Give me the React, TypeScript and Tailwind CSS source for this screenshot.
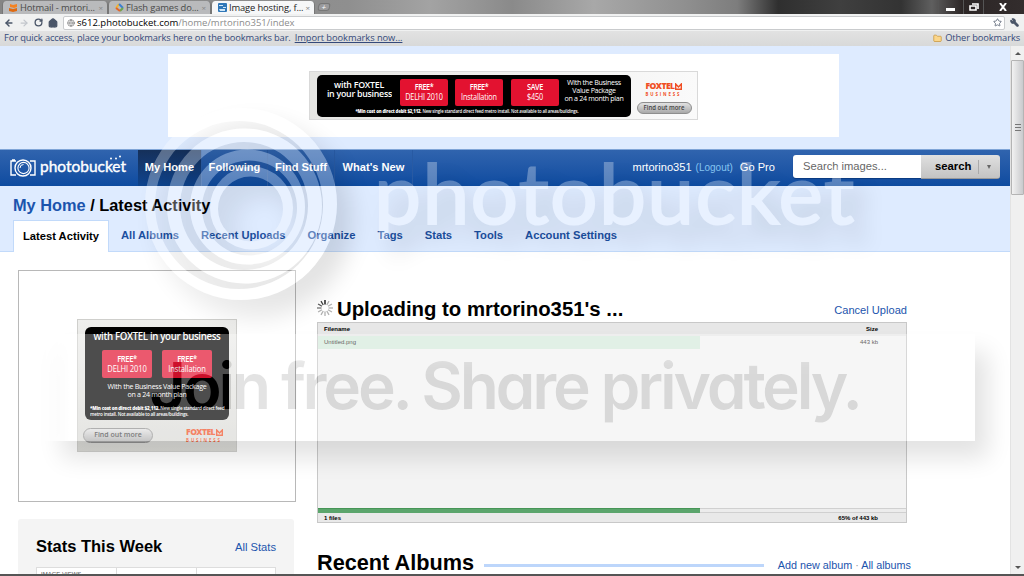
import { ArrowLeft, ArrowRight, RotateCw, House, Globe, Star, Wrench, Folder } from 'lucide-react';

const BROWSER_TABS = [
  { label: 'Hotmail - mrtori...', width: 'w-[106px]', active: false },
  { label: 'Flash games do...', width: 'w-[103px]', active: false },
  { label: 'Image hosting, f...', width: 'w-[104px]', active: true },
];

const NAV_ITEMS = [
  { label: 'My Home', width: 'w-[64px]', active: true },
  { label: 'Following', width: 'w-[66px]', active: false },
  { label: 'Find Stuff', width: 'w-[67px]', active: false },
  { label: "What's New", width: 'w-[78px]', active: false },
];

const SUB_TABS = ['All Albums', 'Recent Uploads', 'Organize', 'Tags', 'Stats', 'Tools', 'Account Settings'];

function TabIcon({ index }: { index: number }) {
  if (index === 0) {
    return (
      <svg width="9" height="9" viewBox="0 0 9 9">
        <path d="M1 1l3 1 4-1v3L5 5 1 4z" fill="#f58220" />
        <path d="M0 5l4 1 4-1v3L4 9 0 8z" fill="#e06a10" />
      </svg>
    );
  }
  if (index === 1) {
    return (
      <svg width="9" height="9" viewBox="0 0 9 9" fill="none" strokeWidth="2">
        <path d="M1 5l3-4" stroke="#f4b32c" />
        <path d="M4 1l4 4" stroke="#3c7fd0" />
        <path d="M8 5L5 8" stroke="#6aa84f" />
        <path d="M5 8L1 5" stroke="#e0662c" />
      </svg>
    );
  }
  return (
    <svg width="9" height="9" viewBox="0 0 9 9">
      <rect width="9" height="9" rx="1" fill="#2f77b8" />
      <path d="M1 2h4v1H1zM5 4h3v1H5zM1 6h6v2H2z" fill="#cfe6f7" />
    </svg>
  );
}

function BrowserChrome() {
  return (
    <div className="h-[46px] font-['Open_Sans','Noto_Sans',sans-serif] text-[#34497a]">
      <div className="flex h-[14px] bg-[linear-gradient(90deg,#858585_0,#8f8f8f_34%,#a3a3a3_42%,#8a8a8a_50%,#a8a8a8_58%,#8f8f8f_67%,#7d7d7d_72%,#2f2f2f_76%,#3f3f3f_82%,#333_88%,#5f5f5f_91%,#2c2626_94%,#332d2d_100%)]">
        <div className="flex flex-1 pl-[2px]">
          {BROWSER_TABS.map((tab, i) => (
            <div
              key={tab.label}
              className={`${tab.width} mt-px flex h-[13px] items-center rounded-t-[4px] border-x border-[#777] pr-[4px] pl-[6px] ${
                tab.active ? 'bg-[#f6f7f8] text-[#222]' : 'bg-[#b9babc] text-[#4a4a4a]'
              }`}
            >
              <TabIcon index={i} />
              <span className="ml-[2px] flex-1 pt-px text-[9.4px] tracking-[-0.14px] whitespace-nowrap">{tab.label}</span>
              <span className="text-[8px] text-[#888]">×</span>
            </div>
          ))}
          <div className="mt-[3px] ml-[3px] flex h-[8px] w-[12px] -skew-x-12 items-center justify-center rounded-[3px] border border-[#777] bg-[#9a9a9c] text-[8px] leading-none text-white">
            +
          </div>
        </div>
        <div className="flex w-[86px] border-l border-[#555]">
          <div className="flex w-[24px] justify-center">
            <span className="mt-[8px] h-[3px] w-[9px] bg-white" />
          </div>
          <div className="flex w-[21px] justify-center border-l border-[#555]">
            <svg className="mt-[3px]" width="10" height="8" viewBox="0 0 10 8" fill="none" stroke="#fff" strokeWidth="1.6">
              <path d="M3 1h6v5" />
              <path d="M1 3h6v4H1z" />
            </svg>
          </div>
          <div className="flex w-[41px] justify-center border-l border-[#555]">
            <svg className="mt-[3px] -ml-[3px]" width="8" height="8" viewBox="0 0 8 8" stroke="#fff" strokeWidth="2">
              <path d="M1 0l6 8M7 0L1 8" />
            </svg>
          </div>
        </div>
      </div>
      <div className="flex h-[17px] items-center bg-[#f0f1f1] pl-[4px]">
        <ArrowLeft size={10} strokeWidth={3.5} color="#4a5568" />
        <ArrowRight className="ml-[5px]" size={10} strokeWidth={3} color="#c2c6cc" />
        <RotateCw className="ml-[5px]" size={9} strokeWidth={3.5} color="#4a5568" />
        <House className="ml-[5px]" size={10} strokeWidth={3} color="#4a5568" fill="#4a5568" />
        <div className="ml-[5px] flex h-[14px] flex-1 items-center rounded-[2px] border border-[#c9cbcd] bg-white pl-[3px]">
          <Globe size={8} color="#777" />
          <span className="ml-[2px] flex-1 text-[9.5px] leading-[12px] text-[#8c8c8c]">
            <span className="text-black">s612.photobucket.com</span>/home/mrtorino351/index
          </span>
          <Star className="mr-[2px]" size={9} color="#4a5568" />
        </div>
        <Wrench className="mx-[5px] -scale-x-100" size={9} strokeWidth={3} color="#4a5568" fill="#4a5568" />
      </div>
      <div className="flex h-[15px] items-center bg-linear-to-b from-[#e2e2e2] to-[#d8d9d9] px-[4px] pb-px text-[9.3px] whitespace-nowrap">
        <span className="tracking-[-0.12px]">For quick access, place your bookmarks here on the bookmarks bar.</span>
        <span className="ml-[4px] tracking-[-0.05px] underline">Import bookmarks now...</span>
        <Folder className="ml-auto" size={9} color="#c8963c" fill="#fbd68a" />
        <span className="ml-[3px] tracking-[-0.1px]">Other bookmarks</span>
      </div>
    </div>
  );
}

function FoxtelLogo() {
  return (
    <div className="font-['Open_Sans',sans-serif] text-[#f04e23]">
      <div className="flex h-[9px] items-center text-[8.6px] leading-[9px] font-extrabold tracking-[-0.6px]">
        FOXTEL
        <svg className="ml-[1px]" width="7" height="7" viewBox="0 0 7 7" fill="none" stroke="#f04e23" strokeWidth="1.4">
          <path d="M.7 1v5.300h5.600V1L3.500 4z" />
        </svg>
      </div>
      <div className="mt-px text-[4.3px] leading-[5px] font-bold tracking-[1.9px]">BUSINESS</div>
    </div>
  );
}

function FindOutMore({ className }: { className: string }) {
  return (
    <div className={`flex items-center justify-center rounded-full border border-[#8e8e8e] bg-linear-to-b from-[#e2e2e2] to-[#a9a9a9] font-semibold whitespace-nowrap text-[#444] ${className}`}>
      <span className="scale-y-110">Find out more</span>
    </div>
  );
}

function Offer({ top, bottom, className }: { top: string; bottom: string; className: string }) {
  return (
    <div className={`flex flex-col items-center justify-center rounded-[2px] bg-[#e31230] text-center whitespace-nowrap text-white ${className}`}>
      <b className="scale-y-115 font-semibold tracking-[-0.4px]">{top}</b>
      <span className="scale-y-115 tracking-[-0.15px]">{bottom}</span>
    </div>
  );
}

function LeaderboardAd() {
  return (
    <div className="ml-[168px] flex h-[83px] w-[671px] items-start bg-white pt-[17px] pl-[141px]">
      <div className="flex h-[49px] w-[389px] border border-[#d9d9d9] bg-linear-to-r from-[#e6e6e3] to-[#fafafa] pt-[3px] pl-[7px] font-['Open_Sans','Noto_Sans',sans-serif]">
        <div className="h-[42px] w-[314px] rounded-[5px] bg-black pt-[4px] text-white">
          <div className="flex h-[27px]">
            <div className="w-[75px] scale-y-110 pt-[2px] text-right text-[8.8px] leading-[9px] font-semibold tracking-[-0.25px] whitespace-nowrap">
              <div className="pr-[8px]">with FOXTEL</div>
              <div>in your business</div>
            </div>
            <Offer top="FREE*" bottom="DELHI 2010" className="ml-[8px] w-[48px] text-[7.3px] leading-[9.5px]" />
            <Offer top="FREE*" bottom="Installation" className="ml-[7px] w-[48px] text-[7.3px] leading-[9.5px]" />
            <Offer top="SAVE" bottom="$450" className="ml-[8px] w-[48px] text-[7.3px] leading-[9.5px]" />
            <div className="ml-[5px] w-[60px] scale-y-110 pt-px text-center text-[7.1px] leading-[7px] tracking-[-0.3px] whitespace-nowrap">
              <div>With the Business</div>
              <div>Value Package</div>
              <div>on a 24 month plan</div>
            </div>
          </div>
          <div className="mt-[2px] scale-y-115 pr-[14px] text-center text-[4.3px] leading-[6px] font-semibold tracking-[-0.15px] whitespace-nowrap">
            <b>*Min cost on direct debit $2,112.</b> New single standard direct feed metro install. Not available to all areas/buildings.
          </div>
        </div>
        <div className="flex flex-1 flex-col items-center pt-[7px]">
          <FoxtelLogo />
          <FindOutMore className="mt-[5px] h-[12px] w-[55px] text-[6px]" />
        </div>
      </div>
    </div>
  );
}

function SideAd() {
  return (
    <div className="flex h-[232px] w-[278px] items-start border border-[#b8b8b8] bg-white pt-[48px] pl-[58px] font-['Open_Sans','Noto_Sans',sans-serif]">
      <div className="h-[133px] w-[160px] border border-[#cfcfcc] bg-linear-to-b from-[#eeeeec] to-[#d9d9d5] pt-[7px] pl-[7px]">
        <div className="h-[93px] w-[144px] rounded-[6px] bg-black pt-[3px] text-center whitespace-nowrap text-white">
          <div className="scale-y-110 text-[9.7px] leading-[13px] font-semibold tracking-[-0.35px]">with FOXTEL in your business</div>
          <div className="mt-[7px] flex justify-center gap-[10px]">
            <Offer top="FREE*" bottom="DELHI 2010" className="h-[28px] w-[50px] text-[7.6px] leading-[10px]" />
            <Offer top="FREE*" bottom="Installation" className="h-[28px] w-[50px] text-[7.6px] leading-[10px]" />
          </div>
          <div className="mt-[5px] scale-y-110 text-[7.1px] leading-[7px] tracking-[-0.3px]">
            With the Business Value Package
            <br />
            on a 24 month plan
          </div>
          <div className="mt-[9px] scale-y-115 pl-[5px] text-left text-[4.6px] leading-[4.8px] font-semibold tracking-[-0.2px]">
            <b>*Min cost on direct debit $2,112.</b> New single standard direct feed
            <br />
            metro install. Not available to all areas/buildings.
          </div>
        </div>
        <div className="flex justify-between pt-[8px] pr-[13px]">
          <FindOutMore className="-ml-[2px] h-[15px] w-[70px] text-[7px]" />
          <FoxtelLogo />
        </div>
      </div>
    </div>
  );
}

function PhotobucketLogo() {
  return (
    <div className="flex w-[138px] items-center pl-[10px] text-white">
      <svg width="26" height="20" viewBox="0 0 26 20" fill="none" stroke="#fff" strokeWidth="1.4">
        <path d="M6 3H1v14h5M20 3h5v14h-5M2 2h3" />
        <circle cx="13" cy="10" r="8" />
        <circle cx="13.5" cy="10" r="5.6" strokeWidth="1.1" />
        <path d="M10 10a3.500 3.500 0 0 1 3.500-3.500" strokeWidth="1" />
      </svg>
      <svg width="96" height="26" viewBox="0 0 96 26" fill="#fff">
        <text x="4" y="17" fontSize="16" textLength="86" lengthAdjust="spacingAndGlyphs" fontFamily="Lato, sans-serif" stroke="#fff" strokeWidth=".4">
          photobucket
        </text>
        <circle cx="75" cy="3.500" r="1" />
        <circle cx="80" cy="3.500" r="1" />
        <circle cx="84" cy="1.500" r="1" />
      </svg>
    </div>
  );
}

function NavBar() {
  return (
    <div className="flex h-[37px] border-t border-[#7fa5d8] bg-linear-to-b from-[#3064ae] to-[#0d4ba0] text-[11px] text-white">
      <PhotobucketLogo />
      {NAV_ITEMS.map((item) => (
        <div
          key={item.label}
          className={`${item.width} flex items-center justify-center border-r border-[#285aa3] pb-[2px] text-[11.1px] font-bold whitespace-nowrap ${
            item.active ? 'bg-linear-to-b from-[#15305a] to-[#0d448f]' : ''
          }`}
        >
          {item.label}
        </div>
      ))}
      <div className="ml-auto flex items-center pb-[2px] whitespace-nowrap">
        <span className="text-[11.1px]">mrtorino351</span>
        <span className="ml-[4px] text-[10px] text-[#84c4f0]">(Logout)</span>
        <span className="ml-[7px] text-[11.1px]">Go Pro</span>
      </div>
      <div className="mt-[5px] mr-[10px] ml-[18px] flex h-[24px] w-[207px] rounded-[3px] text-[#666]">
        <div className="h-[23px] flex-1 rounded-l-[3px] bg-white pl-[10px] text-[11.2px] leading-[22px] shadow-[0_1px_1px_#0b3a80]">Search images...</div>
        <div className="flex w-[79px] items-center rounded-r-[3px] border-b border-[#999] bg-linear-to-b from-[#e0e0e0] to-[#c3c3c3] pl-[14px] text-[11.3px] font-bold text-black">
          search
          <span className="ml-[7px] h-[14px] w-px bg-[#aaa]" />
          <span className="ml-[8px] border-x-[2.5px] border-t-[4px] border-x-transparent border-t-[#666]" />
        </div>
      </div>
    </div>
  );
}

function PageHeader() {
  return (
    <div className="h-[206px] border-b border-[#c2dafa] bg-[#deebff] pt-[8px]">
      <LeaderboardAd />
      <div className="mt-[12px]">
        <NavBar />
      </div>
      <div className="h-[34px] pt-[7px] pl-[13px] text-[16.35px] leading-[24px] font-bold text-black">
        <span className="text-[#1b54ad]">My Home</span> / Latest Activity
      </div>
      <div className="flex pl-[13px] text-[11.2px] font-bold text-[#1b4f9f]">
        <div className="flex h-[32px] w-[96px] items-center justify-center border border-b-0 border-[#c2dafa] bg-white text-black">
          Latest Activity
        </div>
        <div className="flex items-center gap-[22px] pb-[2px] pl-[12px] whitespace-nowrap">
          {SUB_TABS.map((tab) => (
            <span key={tab}>{tab}</span>
          ))}
        </div>
      </div>
    </div>
  );
}

function StatsPanel() {
  return (
    <div className="mt-[17px] h-[60px] w-[276px] rounded-t-[3px] bg-[#f4f4f4] px-[18px] pt-[16px]">
      <div className="flex items-center justify-between">
        <h2 className="text-[16.5px] leading-[22px] font-bold text-black">Stats This Week</h2>
        <span className="pt-[3px] text-[11.2px] text-[#1b54ad]">All Stats</span>
      </div>
      <div className="mt-[10px] flex h-[20px] border border-[#ddd] bg-white text-[6px] leading-[12px] text-[#555]">
        <span className="w-[80px] border-r border-[#ddd] pl-[4px]">IMAGE VIEWS</span>
        <span className="w-[80px] border-r border-[#ddd]" />
      </div>
    </div>
  );
}

function Spinner() {
  return (
    <svg className="-mt-[4px]" width="16" height="16" viewBox="0 0 16 16" strokeWidth="1.3">
      {Array.from({ length: 12 }, (_, i) => (
        <path
          key={i}
          d="M8 0v4.500"
          stroke="#000"
          opacity={i === 0 ? 1 : i > 8 ? 0.85 - (12 - i) * 0.1 : 0.3}
          transform={`rotate(${i * 30} 8 8)`}
        />
      ))}
    </svg>
  );
}

function UploadTable() {
  return (
    <div className="flex h-[201px] w-[590px] flex-col border border-[#c8c8c8] bg-[#f3f3f3] text-[6px] text-[#222]">
      <div className="flex h-[13px] items-center justify-between bg-[#e7e7e7] pr-[28px] pl-[6px] font-bold text-black">
        <span>Filename</span>
        <span>Size</span>
      </div>
      <div className="flex h-[13px] items-center justify-between bg-[linear-gradient(90deg,#d4eadb_382px,transparent_382px)] pr-[28px] pl-[6px]">
        <span>Untitled.png</span>
        <span>443 kb</span>
      </div>
      <div className="flex-1" />
      <div className="h-[5px] border-y border-[#d0d0d0] bg-[#ececec]">
        <div className="-mt-px h-[5px] w-[382px] border-t border-[#469556] bg-[#5ba56c]" />
      </div>
      <div className="flex h-[9px] items-center justify-between bg-[#e9e9e9] pt-[2px] pr-[28px] pl-[6px] font-bold text-black">
        <span>1 files</span>
        <span>65% of 443 kb</span>
      </div>
    </div>
  );
}

function UploadColumn() {
  return (
    <div className="ml-[21px] w-[594px] pt-[45px]">
      <div className="flex w-[590px] items-center">
        <Spinner />
        <h1 className="ml-[4px] flex-1 text-[20.350px] leading-[25px] font-bold text-black">Uploading to mrtorino351's ...</h1>
        <span className="pt-px text-[11.1px] text-[#1b54ad]">Cancel Upload</span>
      </div>
      <UploadTable />
      <div className="mt-[26px] flex items-center whitespace-nowrap">
        <h2 className="text-[21.7px] leading-[28px] font-bold text-black">Recent Albums</h2>
        <span className="mx-[10px] mt-[4px] h-[3px] flex-1 bg-[#bdd6fb]" />
        <span className="pt-[4px] pl-[4px] text-[10.8px] text-[#1b54ad]">
          Add new album <span className="text-[#999]">·</span> All albums
        </span>
      </div>
    </div>
  );
}

function Scrollbar() {
  return (
    <div className="flex w-[14px] flex-col items-center border-l border-[#e3e3e3] bg-[#f0f0f0]">
      <span className="mt-[6px] border-x-[3px] border-b-[3px] border-x-transparent border-b-[#555]" />
      <div className="mt-[5px] flex h-[135px] w-[13px] flex-col items-center justify-center gap-[2px] rounded-[1px] border border-[#b4b4b4] bg-linear-to-r from-[#f2f2f2] to-[#c9cacd]">
        <span className="h-px w-[6px] bg-[#777]" />
        <span className="h-px w-[6px] bg-[#777]" />
        <span className="h-px w-[6px] bg-[#777]" />
      </div>
      <span className="mt-auto mb-[5px] border-x-[3px] border-t-[3px] border-x-transparent border-t-[#555]" />
    </div>
  );
}

// circle as a path so several of them can share one even-odd fill
const circle = (left: number, right: number, cy: number) => {
  const r = (right - left) / 2;
  return `M${left} ${cy}a${r} ${r} 0 1 0 ${2 * r} 0a${r} ${r} 0 1 0 ${-2 * r} 0z`;
};

const RINGS = [
  circle(145, 337, 204),
  circle(155, 323, 205),
  circle(167, 322, 206),
  circle(180, 308, 206),
  circle(190, 305, 207),
  circle(202, 297, 208),
  circle(210, 293, 208),
  circle(218, 283, 209),
].join('');

function BrandShape({ color }: { color: string }) {
  return (
    <>
      <path d={RINGS} fillRule="evenodd" fill={color} />
      <text
        x="374"
        y="224"
        fontSize="84"
        textLength="480"
        fontFamily="Lato, sans-serif"
        fill={color}
        stroke={color}
        strokeWidth="2"
      >
        photobucket
      </text>
    </>
  );
}

function Watermark() {
  return (
    <svg className="pointer-events-none absolute inset-0" width="1024" height="576" viewBox="0 0 1024 576">
      <defs>
        <filter id="soft" x="-10%" y="-40%" width="120%" height="180%">
          <feGaussianBlur stdDeviation="12" />
        </filter>
        <linearGradient id="fade">
          <stop offset="0" stopColor="#fff" stopOpacity="0" />
          <stop offset=".05" stopColor="#fff" />
        </linearGradient>
        <mask id="tagline" maskUnits="userSpaceOnUse" x="0" y="0" width="1024" height="576">
          <rect x="22" y="334" width="953" height="107" fill="url(#fade)" />
          <text
            x="149"
            y="409"
            fontSize="64"
            fontWeight="600"
            textLength="714"
            fontFamily="Inter, sans-serif"
            fill="#000"
            style={{ fontFeatureSettings: '"cv11"' }}
          >
            Join free. Share privately.
          </text>
        </mask>
        <mask id="outside" maskUnits="userSpaceOnUse" x="0" y="0" width="1024" height="576">
          <rect width="1024" height="576" fill="#fff" />
          <BrandShape color="#000" />
          <rect x="22" y="334" width="953" height="107" fill="#000" mask="url(#tagline)" />
        </mask>
      </defs>
      <g mask="url(#outside)">
        <g filter="url(#soft)" opacity=".13" transform="translate(14 16)">
          <BrandShape color="#000" />
        </g>
        <rect x="62" y="352" width="926" height="106" opacity=".11" filter="url(#soft)" />
      </g>
      <g opacity=".3">
        <BrandShape color="#fff" />
        <rect x="22" y="334" width="953" height="107" fill="#fff" mask="url(#tagline)" />
      </g>
    </svg>
  );
}

export default function App() {
  return (
    <div className="relative flex h-[576px] w-[1024px] flex-col overflow-hidden bg-white font-['Liberation_Sans',Arial,sans-serif]">
      <BrowserChrome />
      <div className="flex h-[528px] overflow-hidden">
        <div className="w-[1010px]">
          <PageHeader />
          <div className="flex pl-[18px]">
            <div className="pt-[18px]">
              <SideAd />
              <StatsPanel />
            </div>
            <UploadColumn />
          </div>
        </div>
        <Scrollbar />
      </div>
      <div className="h-[2px] bg-[#555]" />
      <Watermark />
    </div>
  );
}
